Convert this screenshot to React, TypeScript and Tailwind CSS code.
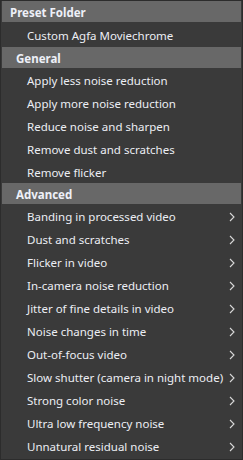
import React from 'react';

const general = [
  'Apply less noise reduction',
  'Apply more noise reduction',
  'Reduce noise and sharpen',
  'Remove dust and scratches',
  'Remove flicker',
];

const advanced = [
  'Banding in processed video',
  'Dust and scratches',
  'Flicker in video',
  'In-camera noise reduction',
  'Jitter of fine details in video',
  'Noise changes in time',
  'Out-of-focus video',
  'Slow shutter (camera in night mode)',
  'Strong color noise',
  'Ultra low frequency noise',
  'Unnatural residual noise',
];

const Chevron = () => (
  <svg width="6" height="10" viewBox="0 0 6 10" className="shrink-0">
    <path d="M1 1 L5 5 L1 9" fill="none" stroke="#d8d8d8" strokeWidth="1.1" />
  </svg>
);

const Header: React.FC<{ label: string; indent?: boolean }> = ({ label, indent }) => (
  <div className={`h-[21px] bg-[#686868] flex items-center pt-[2px] font-bold text-[#eef0f8] ${indent ? 'pl-[14px]' : 'pl-[8px]'}`}>
    {label}
  </div>
);

const Item: React.FC<{ label: string; sub?: boolean; tall?: boolean }> = ({ label, sub, tall }) => (
  <div className={`${tall ? 'h-[25px]' : 'h-[23px]'} flex items-center pt-[2px] pl-[25px] pr-[6px] text-[#eceef4]`}>
    <span className="flex-1 whitespace-nowrap">{label}</span>
    {sub && <Chevron />}
  </div>
);

export default function App() {
  return (
    <div
      className="w-[243px] h-[460px] bg-[#3a3a3a] border border-[#2c2c2c] p-px pt-0 overflow-hidden text-[11.5px] leading-none"
      style={{ fontFamily: '"Noto Sans", "Open Sans", sans-serif' }}
    >
      <Header label="Preset Folder" />
      <Item label="Custom Agfa Moviechrome" tall />
      <Header label="General" indent />
      {general.map(g => <Item key={g} label={g} />)}
      <Header label="Advanced" indent />
      {advanced.map(a => <Item key={a} label={a} sub />)}
    </div>
  );
}
